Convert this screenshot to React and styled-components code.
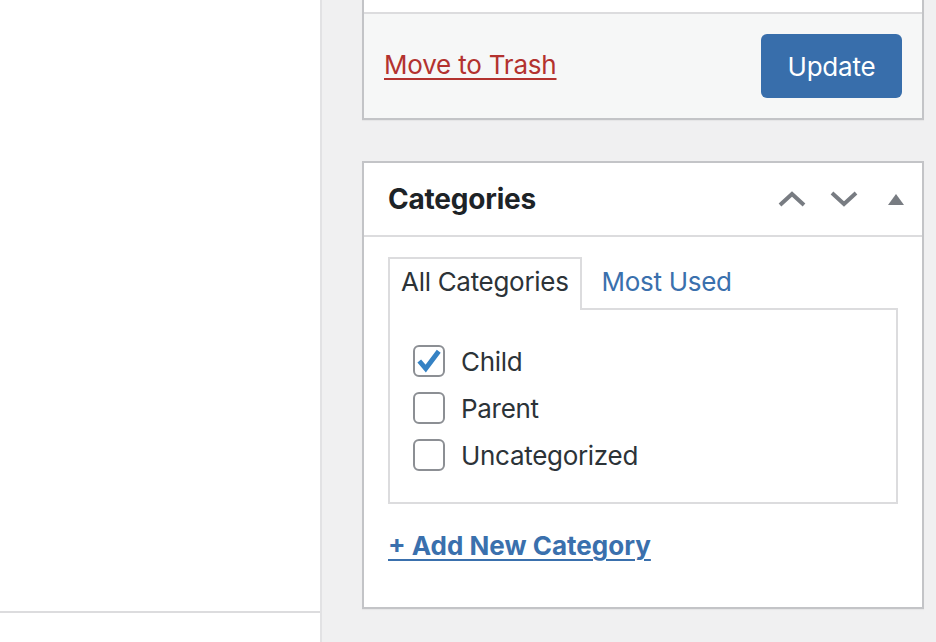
import React from 'react';
import styled, { createGlobalStyle } from 'styled-components';

const GlobalStyle = createGlobalStyle`
  html, body {
    margin: 0;
    padding: 0;
    height: 100%;
    overflow: hidden;
  }
  body {
    font-family: Inter, "Liberation Sans", sans-serif;
    background: #f0f0f1;
    color: #2c3338;
  }
  #root {
    height: 100%;
  }
`;

const Page = styled.div`
  display: grid;
  grid-template-columns: 322px 1fr;
  height: 642px;
`;

const EditorColumn = styled.div`
  background: #fff;
  border-right: 2px solid #e2e2e4;
  display: flex;
  flex-direction: column;
`;

const EditorBody = styled.div`
  height: 611px;
  border-bottom: 2px solid #dcdcde;
`;

const Sidebar = styled.div`
  padding: 0 12px 0 40px;
  display: flex;
  flex-direction: column;
  gap: 41px;
`;

const Box = styled.div`
  border: 2px solid #c3c4c7;
  border-top: ${p => (p.$cut ? 'none' : '2px solid #c3c4c7')};
  background: #fff;
  box-shadow: 0 1px 1px rgba(0, 0, 0, 0.04);
`;

const BoxTop = styled.div`
  height: 12px;
  background: #fff;
  border-bottom: 2px solid #dcdcde;
`;

const Actions = styled.div`
  height: 104px;
  background: #f6f7f7;
  display: flex;
  align-items: center;
  justify-content: space-between;
  padding: 0 20px;
`;

const TrashLink = styled.a`
  color: #b3322f;
  font-size: 26px;
  text-decoration: underline;
  text-decoration-thickness: 2px;
  text-underline-offset: 4px;
  letter-spacing: -0.2px;
  margin-top: -3px;
`;

const UpdateButton = styled.button`
  width: 141px;
  height: 64px;
  border: none;
  border-radius: 6px;
  background: #386eab;
  color: #fff;
  font-family: inherit;
  font-size: 26px;
  letter-spacing: -0.2px;
`;

const BoxHeader = styled.div`
  height: 72px;
  border-bottom: 2px solid #dcdcde;
  display: flex;
  align-items: center;
  padding-left: 24px;
`;

const BoxTitle = styled.h2`
  margin: 0;
  flex: 1;
  font-size: 28px;
  font-weight: 700;
  color: #1d2327;
  letter-spacing: -0.2px;
`;

const HandleButton = styled.span`
  width: 52px;
  height: 72px;
  display: flex;
  align-items: center;
  justify-content: center;
  color: #787c82;
`;

const BoxInside = styled.div`
  padding: 20px 24px 46px;
`;

const Tabs = styled.div`
  display: flex;
  align-items: flex-end;
`;

const Tab = styled.div`
  height: 53px;
  box-sizing: border-box;
  display: flex;
  align-items: center;
  padding: 0 ${p => (p.$active ? '11px' : '18px')} 6px;
  padding-left: ${p => (p.$active ? '11px' : '18px')};
  font-size: 26px;
  letter-spacing: -0.3px;
  color: ${p => (p.$active ? '#2c3338' : '#3a70ad')};
  background: ${p => (p.$active ? '#fff' : 'transparent')};
  border: 2px solid ${p => (p.$active ? '#dcdcde' : 'transparent')};
  border-bottom: none;
  margin-bottom: -2px;
  position: relative;
  z-index: 1;
`;

const TabPanel = styled.div`
  border: 2px solid #dcdcde;
  height: 196px;
  box-sizing: border-box;
  padding: 35px 23px 0;
  display: flex;
  flex-direction: column;
  gap: 15px;
`;

const Row = styled.label`
  display: flex;
  align-items: center;
  gap: 16px;
  font-size: 26px;
  letter-spacing: -0.3px;
  color: #2c3338;
`;

const Check = styled.span`
  width: 32px;
  height: 32px;
  box-sizing: border-box;
  border: 2px solid #8c8f94;
  border-radius: 6px;
  background: #fff;
  display: flex;
  align-items: center;
  justify-content: center;
  flex-shrink: 0;
`;

const AddLink = styled.a`
  display: inline-block;
  margin-top: 26px;
  color: #3a70ad;
  font-size: 26px;
  font-weight: 700;
  text-decoration: underline;
  text-decoration-thickness: 2px;
  text-underline-offset: 4px;
  letter-spacing: 0;
`;

const Chevron = ({ up }) => (
  <svg width="30" height="18" viewBox="0 0 30 18">
    <path
      d={up ? 'M3 15 L15 4 L27 15' : 'M3 3 L15 14 L27 3'}
      fill="none"
      stroke="currentColor"
      strokeWidth="4"
    />
  </svg>
);

const Triangle = () => (
  <svg width="18" height="14" viewBox="0 0 18 14">
    <path d="M1 13 L9 2 L17 13 Z" fill="currentColor" />
  </svg>
);

const Tick = () => (
  <svg width="26" height="26" viewBox="0 0 24 24">
    <path d="M3 12 L9 19 L21 3" fill="none" stroke="#3582c4" strokeWidth="4.5" />
  </svg>
);

const categories = [
  { name: 'Child', checked: true },
  { name: 'Parent', checked: false },
  { name: 'Uncategorized', checked: false },
];

export default function App() {
  return (
    <>
      <GlobalStyle />
      <Page>
        <EditorColumn>
          <EditorBody />
        </EditorColumn>
        <Sidebar>
          <Box $cut>
            <BoxTop />
            <Actions>
              <TrashLink>Move to Trash</TrashLink>
              <UpdateButton>Update</UpdateButton>
            </Actions>
          </Box>
          <Box>
            <BoxHeader>
              <BoxTitle>Categories</BoxTitle>
              <HandleButton><Chevron up /></HandleButton>
              <HandleButton><Chevron /></HandleButton>
              <HandleButton><Triangle /></HandleButton>
            </BoxHeader>
            <BoxInside>
              <Tabs>
                <Tab $active>All Categories</Tab>
                <Tab>Most Used</Tab>
              </Tabs>
              <TabPanel>
                {categories.map(c => (
                  <Row key={c.name}>
                    <Check>{c.checked && <Tick />}</Check>
                    {c.name}
                  </Row>
                ))}
              </TabPanel>
              <AddLink>+ Add New Category</AddLink>
            </BoxInside>
          </Box>
        </Sidebar>
      </Page>
    </>
  );
}
